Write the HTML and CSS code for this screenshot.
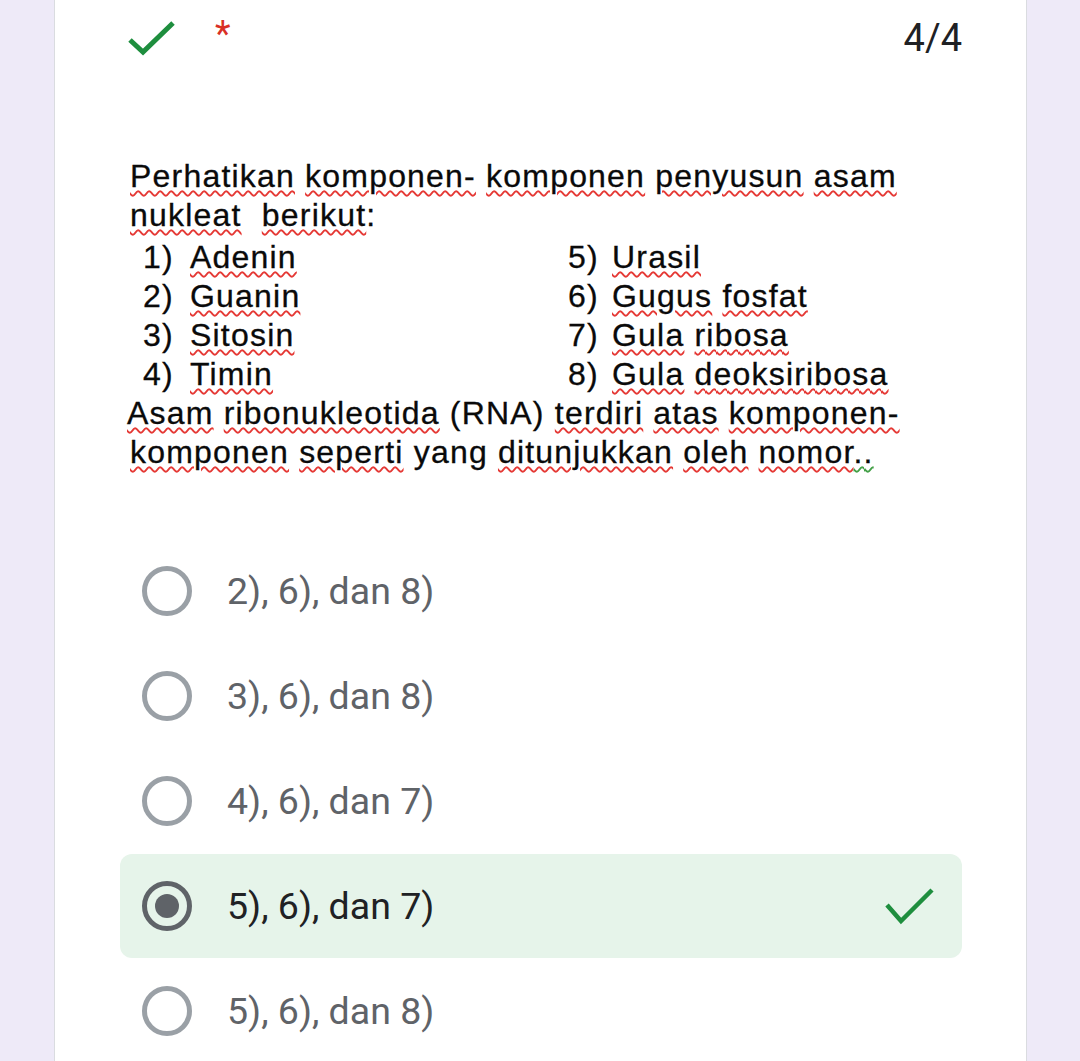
FILE: index.html
```html
<!DOCTYPE html>
<html lang="id">
<head>
<meta charset="utf-8">
<title>Kuis</title>
<link rel="stylesheet" href="styles.css">
</head>
<body>
<div class="card">
  <div class="header">
    <svg class="ok-icon" width="48" height="38" viewBox="0 0 48 38"><path d="M2 20 L15 32 L45 3" fill="none" stroke="#1e8e3e" stroke-width="5"/></svg>
    <span class="req">*</span>
    <span class="score">4/4</span>
  </div>

  <div class="question">
    <p class="qline"><span class="sp">Perhatikan</span> <span class="sp">komponen-</span> <span class="sp">komponen</span> <span class="sp">penyusun</span> <span class="sp">asam</span></p>
    <p class="qline"><span class="sp">nukleat</span>&nbsp; <span class="sp">berikut</span>:</p>
    <div class="list">
      <div class="col left">
        <div class="item"><span class="num">1)</span><span class="sp">Adenin</span></div>
        <div class="item"><span class="num">2)</span><span class="sp">Guanin</span></div>
        <div class="item"><span class="num">3)</span><span class="sp">Sitosin</span></div>
        <div class="item"><span class="num">4)</span><span class="sp">Timin</span></div>
      </div>
      <div class="col right">
        <div class="item"><span class="num">5)</span><span class="sp">Urasil</span></div>
        <div class="item"><span class="num">6)</span><span><span class="sp">Gugus</span> <span class="sp">fosfat</span></span></div>
        <div class="item"><span class="num">7)</span><span><span class="sp">Gula</span> <span class="sp">ribosa</span></span></div>
        <div class="item"><span class="num">8)</span><span><span class="sp">Gula</span> <span class="sp">deoksiribosa</span></span></div>
      </div>
    </div>
    <p class="qline tight"><span class="sp">Asam</span> <span class="sp">ribonukleotida</span> (RNA) <span class="sp">terdiri</span> <span class="sp">atas</span> <span class="sp">komponen-</span></p>
    <p class="qline"><span class="sp">komponen</span> <span class="sp">seperti</span> yang <span class="sp">ditunjukkan</span> <span class="sp">oleh</span> <span class="sp">nomor</span><span class="gp">..</span></p>
  </div>

  <div class="options">
    <div class="option"><span class="radio"></span><span class="label">2), 6), dan 8)</span></div>
    <div class="option"><span class="radio"></span><span class="label">3), 6), dan 8)</span></div>
    <div class="option"><span class="radio"></span><span class="label">4), 6), dan 7)</span></div>
    <div class="option selected"><span class="radio checked"><span class="dot"></span></span><span class="label">5), 6), dan 7)</span>
      <svg class="ok-small" width="50" height="40" viewBox="0 0 50 40"><path d="M3 19 L17 35 L48 4" fill="none" stroke="#1e8e3e" stroke-width="4.5"/></svg>
    </div>
    <div class="option"><span class="radio"></span><span class="label">5), 6), dan 8)</span></div>
  </div>
</div>
</body>
</html>
```
FILE: styles.css
```css
html, body {
  margin: 0;
  padding: 0;
}
body {
  background: #eeeaf8;
  font-family: Roboto, "Liberation Sans", Arial, sans-serif;
  overflow: hidden;
}
.card {
  margin-left: 54px;
  width: 973px;
  min-height: 1061px;
  box-sizing: border-box;
  background: #ffffff;
  border-left: 1px solid #dadce0;
  border-right: 1px solid #dadce0;
  padding: 0 64px 0 65px;
}
.header {
  display: flex;
  align-items: flex-start;
  padding: 18px 0 0 10px;
  height: 38px;
}
.ok-icon {
  margin-top: 2px;
  margin-left: -2px;
}
.req {
  color: #d93025;
  font-size: 36px;
  line-height: 36px;
  margin-left: 39px;
  margin-top: -2px;
}
.score {
  margin-left: auto;
  font-size: 38px;
  line-height: 38px;
  color: #202124;
  margin-top: 1px;
}
.question {
  margin-top: 101px;
  padding-left: 10px;
  font-family: "Liberation Sans", Arial, sans-serif;
  font-size: 32px;
  line-height: 39px;
  letter-spacing: 1.2px;
  color: #0a0a0a;
  -webkit-text-stroke: 0.3px #0a0a0a;
}
.qline {
  margin: 0;
  white-space: nowrap;
}
.qline.tight {
  margin-left: -3px;
}
.sp {
  text-decoration: underline wavy #e53935;
  text-decoration-thickness: 1.5px;
  text-underline-offset: 3px;
}
.gp {
  text-decoration: underline wavy #43a047;
  text-decoration-thickness: 1.5px;
  text-underline-offset: 3px;
}
.list {
  display: flex;
  padding-top: 3px;
}
.col.left {
  width: 425px;
  padding-left: 13px;
}
.item {
  display: flex;
  white-space: nowrap;
}
.left .num {
  width: 47px;
}
.right .num {
  width: 44px;
}
.options {
  margin-top: 67px;
  display: flex;
  flex-direction: column;
  gap: 1px;
}
.option {
  height: 104px;
  display: flex;
  align-items: center;
  padding-left: 22px;
  padding-right: 28px;
  border-radius: 12px;
  font-size: 37.5px;
  color: #5f6368;
}
.option.selected {
  background: #e6f4ea;
  color: #202124;
}
.radio {
  width: 50px;
  height: 50px;
  box-sizing: border-box;
  border: 5px solid #9aa0a6;
  border-radius: 50%;
  display: flex;
  align-items: center;
  justify-content: center;
  flex-shrink: 0;
}
.radio.checked {
  border-color: #5f6368;
}
.dot {
  width: 24px;
  height: 24px;
  border-radius: 50%;
  background: #5f6368;
}
.label {
  margin-left: 35px;
}
.ok-small {
  margin-left: auto;
}
```
